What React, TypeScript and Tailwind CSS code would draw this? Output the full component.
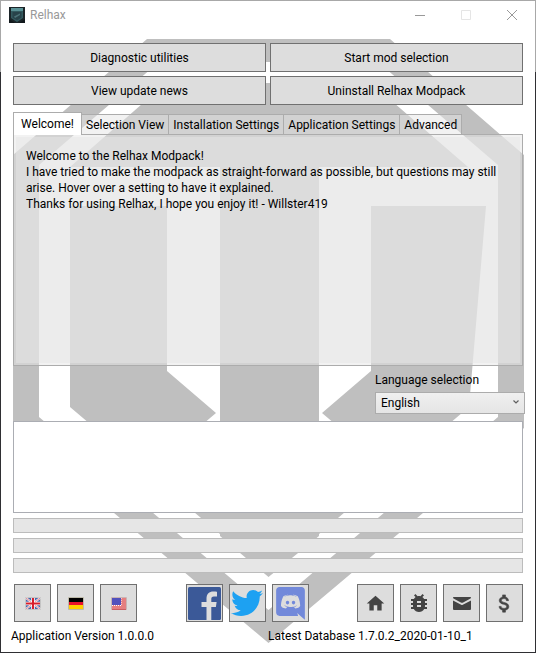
import type { ReactNode } from "react";
import { FaTwitter } from "react-icons/fa";
import { MdBugReport, MdHome } from "react-icons/md";

const actions = [
  "Diagnostic utilities",
  "Start mod selection",
  "View update news",
  "Uninstall Relhax Modpack",
];

const tabs = [
  "Selection View",
  "Installation Settings",
  "Application Settings",
  "Advanced",
];

function Emblem() {
  return (
    <svg
      viewBox="13 39 511 604"
      preserveAspectRatio="none"
      className="absolute inset-x-3 top-[38px] h-[604px] w-[calc(100%-23px)]"
      fill="#bfbfbf"
      aria-hidden="true"
    >
      <path
        fillRule="evenodd"
        d="M147 39H390L524 155V428L268.500 643L13 428V155ZM159 62L39 165V417L268.500 610L498 417V165L378 62Z"
      />
      <path d="M166 83H371L468 167H319V536L268.500 577L220 536V167H70Z" />
      <path d="M70 206H167V371L216 413L190 435L240 478V551L70 407Z" />
      <path d="M371 206H486L469 407L299 551V478L348 435L322 413L371 371Z" />
    </svg>
  );
}

function AppIcon() {
  return (
    <svg viewBox="0 0 16 16" className="size-4" aria-hidden="true">
      <rect width="16" height="16" fill="#1b2428" />
      <path d="M2 1h12v10L8 15 2 11z" fill="#335a5f" />
      <path d="M2 1h12v3H2z" fill="#5a9296" />
      <path d="M3.500 5h9v5.500L8 13.500 3.500 10.500z" fill="#28434a" />
      <path d="M5 9.500l6-3v1.500L6 11z" fill="#4c7378" />
      <path d="M0 12l6 4H0zM16 12l-6 4h6z" fill="#11181c" />
    </svg>
  );
}

function UkFlag() {
  return (
    <svg viewBox="0 0 16 13" className="h-[13px] w-4" aria-hidden="true">
      <rect width="16" height="13" rx="1" fill="#c4c4c4" />
      <rect x="1" y="1" width="14" height="11" fill="#4a68ac" />
      <path d="M1 1l14 11M15 1L1 12" stroke="#f3f3f6" strokeWidth="2.200" />
      <path d="M1 1l14 11M15 1L1 12" stroke="#df6a74" strokeWidth="0.800" />
      <path d="M8 1v11M1 6.500h14" stroke="#fff" strokeWidth="3.600" />
      <path d="M8 1v11M1 6.500h14" stroke="#d81e2c" strokeWidth="2" />
    </svg>
  );
}

function GermanFlag() {
  return (
    <svg viewBox="0 0 16 13" className="h-[13px] w-4" aria-hidden="true">
      <rect width="16" height="13" rx="1" fill="#bcb9a8" />
      <rect x="1" y="1" width="14" height="4" fill="#000" />
      <rect x="1" y="5" width="14" height="3" fill="#e8112d" />
      <rect x="1" y="8" width="14" height="4" fill="#ffce00" />
    </svg>
  );
}

function UsFlag() {
  return (
    <svg viewBox="0 0 16 13" className="h-[13px] w-4" aria-hidden="true">
      <rect width="16" height="13" rx="1" fill="#c9b4b4" />
      <rect x="1" y="1" width="14" height="11" fill="#e57f80" />
      <path d="M1 12.500h14" stroke="#c95f62" />
      <rect x="1" y="1" width="9" height="7" fill="#5151bd" />
      <path d="M1 8.500h9" stroke="#fff" strokeDasharray="1 1" />
      <path d="M10.500 1v8" stroke="#f7c9c9" strokeDasharray="1 1" />
    </svg>
  );
}

function Facebook() {
  return (
    <svg viewBox="0 0 33 33" className="size-[33px]" aria-hidden="true">
      <rect width="33" height="33" rx="1.500" fill="#3b5998" />
      <path
        d="M18.500 33V20H13.500V15H18.500V11.500C18.500 7 21.200 4.500 25.300 4.500C27 4.500 28.300 4.600 29 4.700V9.500H26C23.800 9.500 23.300 10.500 23.300 12V15H28.600L27.900 20H23.300V33Z"
        fill="#dddddd"
      />
    </svg>
  );
}

function Discord() {
  return (
    <svg
      viewBox="35 20 175 201"
      className="h-[33px] w-[29px]"
      fill="#7289da"
      aria-hidden="true"
    >
      <path d="M104.400 103.900c-5.700 0-10.200 5-10.200 11.100s4.600 11.100 10.200 11.100c5.700 0 10.200-5 10.200-11.100.1-6.100-4.500-11.100-10.200-11.100zM140.900 103.900c-5.700 0-10.200 5-10.200 11.100s4.600 11.100 10.200 11.100c5.700 0 10.200-5 10.200-11.100s-4.500-11.100-10.200-11.100z" />
      <path d="M189.500 20h-134C44.200 20 35 29.200 35 40.600v135.200c0 11.400 9.200 20.600 20.500 20.600h113.400l-5.300-18.500 12.800 11.900 12.100 11.200 21.500 19V40.600c0-11.400-9.200-20.600-20.500-20.600zm-38.600 130.600s-3.600-4.300-6.600-8.100c13.100-3.700 18.100-11.900 18.100-11.900-4.100 2.700-8 4.600-11.500 5.900-5 2.100-9.800 3.500-14.500 4.300-9.600 1.800-18.400 1.300-25.900-.1-5.700-1.100-10.600-2.700-14.700-4.300-2.300-.9-4.800-2-7.300-3.400-.3-.2-.6-.3-.9-.5-.2-.1-.3-.2-.4-.3-1.800-1-2.800-1.700-2.800-1.700s4.800 8 17.500 11.800c-3 3.800-6.700 8.300-6.700 8.300-22.100-.7-30.500-15.200-30.500-15.200 0-32.200 14.400-58.300 14.400-58.300 14.400-10.800 28.100-10.500 28.100-10.500l1 1.200c-18 5.200-26.300 13.100-26.300 13.100s2.200-1.200 5.900-2.900c10.700-4.700 19.200-6 22.700-6.300.6-.1 1.100-.2 1.700-.2 6.100-.8 13-1 20.200-.2 9.500 1.100 19.700 3.900 30.100 9.600 0 0-7.900-7.500-24.900-12.700l1.400-1.600s13.700-.3 28.100 10.500c0 0 14.400 26.100 14.400 58.300 0 0-8.500 14.500-30.600 15.200z" />
    </svg>
  );
}

function Mail() {
  return (
    <svg viewBox="0 0 18 13" className="h-[13px] w-[18px]" fill="currentColor" aria-hidden="true">
      <path d="M0.600 0H17.400C18.100 0 18.200 1 17.500 1.400L9.700 5.700Q9 6 8.300 5.700L0.500 1.400C-0.200 1 -0.100 0 0.600 0Z" />
      <path d="M0 3.400L8.200 7.700Q9 8.100 9.800 7.700L18 3.400V12Q18 13 17 13H1Q0 13 0 12Z" />
    </svg>
  );
}

function Donate() {
  return (
    <svg
      viewBox="0 0 24 24"
      className="size-[23px]"
      fill="currentColor"
      stroke="currentColor"
      strokeWidth="0.600"
      aria-hidden="true"
    >
      <path d="M11.800 10.900c-2.270-.59-3-1.200-3-2.150 0-1.090 1.010-1.850 2.700-1.850 1.780 0 2.440.85 2.500 2.100h2.210c-.07-1.720-1.120-3.300-3.210-3.810V3h-3v2.160c-1.940.42-3.500 1.680-3.500 3.610 0 2.310 1.910 3.460 4.700 4.130 2.500.6 3 1.480 3 2.410 0 .69-.49 1.790-2.700 1.790-2.060 0-2.870-.92-2.980-2.100h-2.200c.12 2.190 1.760 3.420 3.680 3.830V21h3v-2.150c1.950-.37 3.500-1.500 3.500-3.550 0-2.840-2.430-3.810-4.700-4.400z" />
    </svg>
  );
}

function IconButton({ label, children }: { label: string; children: ReactNode }) {
  return (
    <button
      type="button"
      aria-label={label}
      className="flex h-[38px] w-[37px] items-center justify-center border border-[#707070] bg-[#dddddd] text-[#444444]"
    >
      {children}
    </button>
  );
}

export default function App() {
  return (
    <div className="min-h-screen bg-linear-to-b from-[#a8a8a8] from-[72px] to-[#2f2f33] to-[72px] p-px font-['Roboto','Open_Sans',sans-serif] text-xs leading-4 text-black">
      <div className="relative isolate min-h-[calc(100vh-2px)] bg-white">
        <Emblem />
        <div className="relative">
          <header className="flex h-[42px] items-start justify-between text-[#999999]">
            <div className="flex h-7 items-center gap-[5px] pl-2">
              <AppIcon />
              <h1>Relhax</h1>
            </div>
            <div className="flex">
              <button type="button" aria-label="Minimize" className="flex h-7 w-[46px] items-center justify-center">
                <svg viewBox="0 0 10 10" className="size-2.5" stroke="currentColor" fill="none">
                  <path d="M0 5.500H10" />
                </svg>
              </button>
              <button type="button" disabled aria-label="Maximize" className="flex h-7 w-[46px] items-center justify-center text-[#e5e5e5]">
                <svg viewBox="0 0 10 10" className="size-2.5" stroke="currentColor" fill="none">
                  <path d="M0.500 0.500H9.500V9.500H0.500Z" />
                </svg>
              </button>
              <button type="button" aria-label="Close" className="flex h-7 w-[46px] items-center justify-center">
                <svg viewBox="0 0 10 10" className="size-2.5" stroke="currentColor" fill="none">
                  <path d="M0 0L10 10M10 0L0 10" />
                </svg>
              </button>
            </div>
          </header>

          <main className="px-3">
            <div className="grid grid-cols-2 gap-1">
              {actions.map((name) => (
                <button key={name} type="button" className="h-[29px] border border-[#707070] bg-[#dddddd]">
                  {name}
                </button>
              ))}
            </div>

            <div role="tablist" className="relative mt-[7px] -mb-px flex items-end">
              <button
                type="button"
                role="tab"
                id="welcome-tab"
                aria-selected="true"
                aria-controls="welcome-panel"
                className="h-[23px] w-[69px] border border-b-0 border-[#acacac] bg-white"
              >
                Welcome!
              </button>
              {tabs.map((name) => (
                <button
                  key={name}
                  type="button"
                  role="tab"
                  aria-selected="false"
                  className="h-[21px] border border-l-0 border-[#acacac] bg-[#e5e5e5]/50 px-1"
                >
                  {name}
                </button>
              ))}
            </div>
            <section
              id="welcome-panel"
              role="tabpanel"
              aria-labelledby="welcome-tab"
              className="flex h-[232px] border border-[#acacac] bg-[#e5e5e5]/50 p-0.5"
            >
              <div className="flex-1 bg-[#e5e5e5]/50 px-2.5 py-[11px]">
                <p>Welcome to the Relhax Modpack!</p>
                <p>
                  I have tried to make the modpack as straight-forward as possible, but questions may still
                  arise. Hover over a setting to have it explained.
                </p>
                <p>Thanks for using Relhax, I hope you enjoy it! - Willster419</p>
              </div>
            </section>
          </main>

          <div className="flex justify-end pt-1.5 pr-2.5">
            <div className="flex w-[150px] flex-col gap-1">
              <label htmlFor="language">Language selection</label>
              <div className="relative">
                <select
                  id="language"
                  defaultValue="English"
                  className="h-[22px] w-full appearance-none border border-[#acacac] bg-linear-to-b from-[#f0f0f0] to-[#e5e5e5] px-[5px]"
                >
                  <option>English</option>
                  <option>Deutsch</option>
                </select>
                <svg
                  viewBox="0 0 6 4"
                  className="pointer-events-none absolute top-2 right-1.5 h-1 w-1.5"
                  fill="none"
                  stroke="#606060"
                  strokeWidth="1.200"
                  aria-hidden="true"
                >
                  <path d="M0.500 0.500L3 3L5.500 0.500" />
                </svg>
              </div>
            </div>
          </div>

          <div className="flex flex-col gap-[5px] px-3 pt-[7px]">
            <textarea
              readOnly
              aria-label="Installation log"
              className="block h-[92px] w-full resize-none border border-[#abadb3] bg-white p-1"
            />
            {["Overall progress", "Package progress", "File progress"].map((name) => (
              <progress
                key={name}
                aria-label={name}
                value={0}
                max={100}
                className="block h-[15px] w-full appearance-none border border-[#bcbcbc] bg-[#e6e6e6] [&::-webkit-progress-bar]:bg-[#e6e6e6]"
              />
            ))}
          </div>

          <div className="flex justify-between pt-[11px] pr-3 pl-[13px]">
            <div className="flex gap-1.5">
              <IconButton label="English"><UkFlag /></IconButton>
              <IconButton label="German"><GermanFlag /></IconButton>
              <IconButton label="American English"><UsFlag /></IconButton>
            </div>
            <div className="flex gap-1.5">
              <IconButton label="Facebook"><Facebook /></IconButton>
              <IconButton label="Twitter"><FaTwitter className="size-8 text-[#1da1f2]" /></IconButton>
              <IconButton label="Discord"><Discord /></IconButton>
            </div>
            <div className="flex gap-1.5">
              <IconButton label="Home page"><MdHome className="size-[21px]" /></IconButton>
              <IconButton label="Report a bug"><MdBugReport className="size-6" /></IconButton>
              <IconButton label="Send mail"><Mail /></IconButton>
              <IconButton label="Donate"><Donate /></IconButton>
            </div>
          </div>

          <footer className="grid grid-cols-2 px-2.5 pt-1.5 pb-2">
            <p>Application Version 1.0.0.0</p>
            <p>Latest Database 1.7.0.2_2020-01-10_1</p>
          </footer>
        </div>
      </div>
    </div>
  );
}
